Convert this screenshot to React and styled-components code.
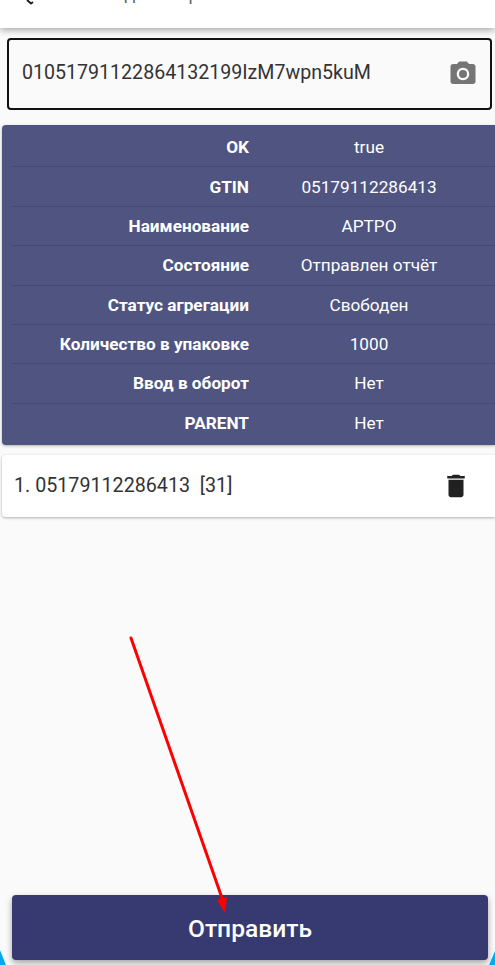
import styled, { createGlobalStyle } from "styled-components";

const GlobalStyle = createGlobalStyle`
  html, body {
    margin: 0;
    padding: 0;
    background: #fafafa;
    overflow: hidden;
  }
`;

const Page = styled.div`
  position: relative;
  width: 495px;
  height: 965px;
  overflow: hidden;
  display: flex;
  flex-direction: column;
  background: #fafafa;
  font-family: Roboto, "Noto Sans", sans-serif;
`;

const Header = styled.header`
  height: 28px;
  flex: none;
  background: #fff;
  box-shadow: 0 2px 7px rgba(0, 0, 0, 0.35);
  overflow: hidden;
  display: flex;
  justify-content: space-between;
  padding: 0 15px 0 84px;
  position: relative;
  z-index: 1;
`;

const HeaderText = styled.span`
  margin-top: -17px;
  font-size: 18px;
  line-height: 21px;
  color: #666;
`;

const BackMark = styled.svg`
  position: absolute;
  left: 22px;
  top: 0;
`;

const ScanField = styled.div`
  margin: 10px 3px 0 7px;
  height: 72px;
  box-sizing: border-box;
  border: 2px solid #111;
  border-radius: 4px;
  display: flex;
  align-items: center;
  justify-content: space-between;
  padding: 0 12px 0 13px;
  background: #fafafa;
`;

const ScanValue = styled.span`
  font-size: 19.6px;
  color: #333;
  padding-bottom: 3px;
`;

const InfoTable = styled.div`
  margin: 15px 0 0 2px;
  height: 320px;
  box-sizing: border-box;
  padding: 3px 0;
  background: #4f5480;
  border-radius: 4px 0 0 4px;
  box-shadow: 0 1px 3px rgba(0, 0, 0, 0.3);
  display: flex;
  flex-direction: column;
`;

const InfoRow = styled.div`
  flex: 1;
  margin: 0 0 0 10px;
  display: grid;
  grid-template-columns: 237px 1fr;
  align-items: center;
  color: #fff;
  font-size: 17.2px;
  border-bottom: ${(p) => (p.$last ? "none" : "1px solid #464a73")};
`;

const InfoLabel = styled.span`
  text-align: right;
  font-weight: 700;
`;

const InfoValue = styled.span`
  text-align: center;
  padding-right: 6px;
`;

const ListCard = styled.div`
  margin: 10px 0 0 2px;
  height: 62px;
  box-sizing: border-box;
  background: #fff;
  border-radius: 4px 0 0 4px;
  box-shadow: 0 1px 3px rgba(0, 0, 0, 0.3);
  display: flex;
  align-items: center;
  justify-content: space-between;
  padding: 0 24px 0 12px;
  font-size: 19.7px;
  color: #333;
  white-space: pre;
`;

const ListText = styled.span`
  padding-bottom: 1px;
`;

const SendButton = styled.button`
  margin: auto 7px 5px 12px;
  height: 65px;
  flex: none;
  border: none;
  border-radius: 4px;
  padding: 2px 0 0;
  background: #363a70;
  color: #fff;
  font-family: inherit;
  font-size: 24.6px;
  font-weight: 500;
  box-shadow: 0 3px 6px rgba(0, 0, 0, 0.35);
`;

const Overlay = styled.svg`
  position: absolute;
  left: 0;
  top: 0;
  pointer-events: none;
`;

const rows = [
  ["OK", "true"],
  ["GTIN", "05179112286413"],
  ["Наименование", "АРТРО"],
  ["Состояние", "Отправлен отчёт"],
  ["Статус агрегации", "Свободен"],
  ["Количество в упаковке", "1000"],
  ["Ввод в оборот", "Нет"],
  ["PARENT", "Нет"],
];

const App = () => {
  return (
    <Page>
      <GlobalStyle />
      <Header>
        <BackMark width="20" height="6" viewBox="0 0 20 6">
          <path d="M5 0 L9 3.5 L11 2" fill="none" stroke="#222" strokeWidth="2" />
        </BackMark>
        <HeaderText>Заводит сборка</HeaderText>
        <HeaderText>Готово</HeaderText>
      </Header>
      <ScanField>
        <ScanValue>01051791122864132199IzM7wpn5kuM</ScanValue>
        <svg width="30" height="30" viewBox="0 0 24 24" fill="#757575">
          <circle cx="12" cy="12" r="3.2" />
          <path d="M9 2L7.17 4H4c-1.1 0-2 .9-2 2v12c0 1.1.9 2 2 2h16c1.1 0 2-.9 2-2V6c0-1.1-.9-2-2-2h-3.17L15 2H9zm3 15c-2.76 0-5-2.24-5-5s2.24-5 5-5 5 2.24 5 5-2.24 5-5 5z" />
        </svg>
      </ScanField>
      <InfoTable>
        {rows.map(([label, value], i) => (
          <InfoRow key={label} $last={i === rows.length - 1}>
            <InfoLabel>{label}</InfoLabel>
            <InfoValue>{value}</InfoValue>
          </InfoRow>
        ))}
      </InfoTable>
      <ListCard>
        <ListText>1. 05179112286413  [31]</ListText>
        <svg width="30" height="30" viewBox="0 0 24 24" fill="#212121">
          <path d="M6 19c0 1.1.9 2 2 2h8c1.1 0 2-.9 2-2V7H6v12zM19 4h-3.5l-1-1h-5l-1 1H5v2h14V4z" />
        </svg>
      </ListCard>
      <SendButton>Отправить</SendButton>
      <Overlay width="495" height="965" viewBox="0 0 495 965">
        <line x1="131" y1="638" x2="222" y2="898" stroke="#ff0000" strokeWidth="3" strokeLinecap="round" />
        <path d="M217 900 L227 897 L225 913 Z" fill="#ff0000" />
        <path d="M0 950 L6 965 L0 965 Z" fill="#04a9f0" />
        <path d="M495 951 L489 965 L495 965 Z" fill="#04a9f0" />
      </Overlay>
    </Page>
  );
};

export default App;
